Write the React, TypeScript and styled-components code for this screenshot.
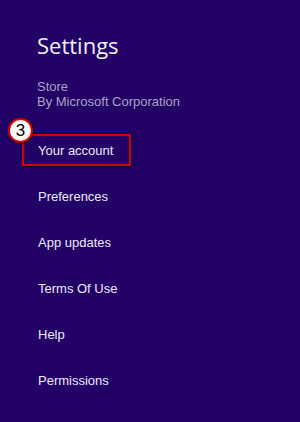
import React from "react";
import styled, { createGlobalStyle } from "styled-components";

const Global = createGlobalStyle`
  html, body { margin: 0; padding: 0; background: #220066; }
  body { font-family: "Liberation Sans", Arial, sans-serif; }
`;

const Pane = styled.div`
  width: 300px;
  height: 422px;
  box-sizing: border-box;
  background: #220066;
  padding: 31px 0 0 37px;
  display: flex;
  flex-direction: column;
  overflow: hidden;
`;

const Title = styled.h1`
  margin: 0;
  font-family: "Open Sans", "Liberation Sans", sans-serif;
  font-weight: 400;
  font-size: 22px;
  line-height: 28px;
  color: #f2f0f8;
`;

const Sub = styled.div`
  margin-top: 20px;
  display: flex;
  flex-direction: column;
  font-size: 13px;
  line-height: 15px;
  color: #aaa3c8;
`;

const Menu = styled.nav`
  margin-top: 25px;
  display: flex;
  flex-direction: column;
  gap: 14px;
`;

const Item = styled.div<{ $active?: boolean }>`
  position: relative;
  box-sizing: border-box;
  height: 32px;
  width: 109px;
  margin-left: -15px;
  padding: 1px 0 0 14px;
  border: 2px solid ${(p) => (p.$active ? "#d40000" : "transparent")};
  box-shadow: ${(p) => (p.$active ? "1px 1px 2px rgba(0,0,0,0.5)" : "none")};
  font-size: 13px;
  line-height: 28px;
  color: #ece9f6;
  white-space: nowrap;
`;

const Badge = styled.div`
  position: absolute;
  left: -16px;
  top: -18px;
  width: 25px;
  height: 25px;
  box-sizing: border-box;
  border-radius: 50%;
  border: 2px solid #d40000;
  background: radial-gradient(circle at 45% 40%, #ffffff 55%, #f3d6d6 80%, #e8b0b0 100%);
  box-shadow: 1px 1px 2px rgba(0,0,0,0.6);
  display: flex;
  align-items: center;
  justify-content: center;
  font-family: "Liberation Sans", Arial, sans-serif;
  font-size: 17px;
  line-height: 1;
  color: #000;
`;

const items = ["Your account", "Preferences", "App updates", "Terms Of Use", "Help", "Permissions"];

export default function App() {
  return (
    <>
      <Global />
      <Pane>
        <Title>Settings</Title>
        <Sub>
          <span>Store</span>
          <span>By Microsoft Corporation</span>
        </Sub>
        <Menu>
          {items.map((t, i) => (
            <Item key={t} $active={i === 0}>
              {i === 0 && <Badge>3</Badge>}
              {t}
            </Item>
          ))}
        </Menu>
      </Pane>
    </>
  );
}
